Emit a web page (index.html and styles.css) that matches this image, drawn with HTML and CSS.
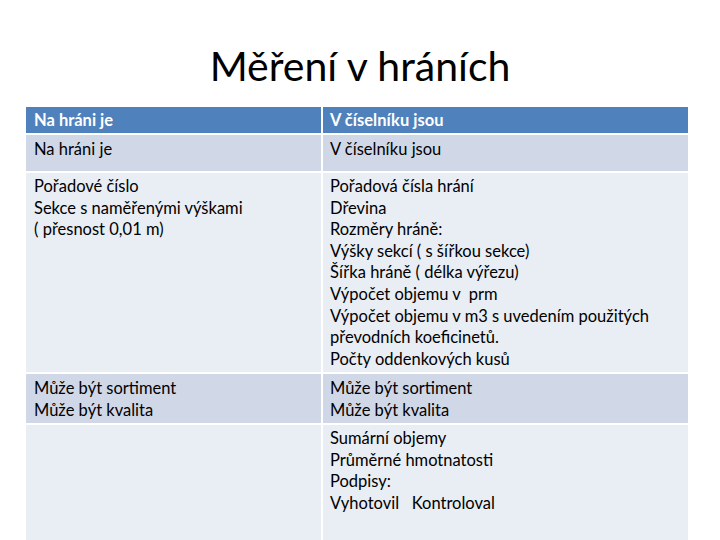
FILE: index.html
```html
<!DOCTYPE html>
<html lang="cs">
<head>
<meta charset="utf-8">
<link rel="stylesheet" href="styles.css">
</head>
<body>
<div class="slide">
  <h1 class="title">Měření v hráních</h1>
  <div class="table">
    <div class="cell head">Na hráni je</div>
    <div class="cell head">V číselníku jsou</div>
    <div class="cell dark">Na hráni je</div>
    <div class="cell dark">V číselníku jsou</div>
    <div class="cell light r2">Pořadové číslo<br>Sekce s naměřenými výškami<br>( přesnost 0,01 m)</div>
    <div class="cell light r2">Pořadová čísla hrání<br>Dřevina<br>Rozměry hráně:<br>Výšky sekcí ( s šířkou sekce)<br>Šířka hráně ( délka výřezu)<br>Výpočet objemu v&nbsp; prm<br>Výpočet objemu v m3 s uvedením použitých převodních koeficinetů.<br>Počty oddenkových kusů</div>
    <div class="cell dark r3">Může být sortiment<br>Může být kvalita</div>
    <div class="cell dark r3">Může být sortiment<br>Může být kvalita</div>
    <div class="cell light r4"></div>
    <div class="cell light r4">Sumární objemy<br>Průměrné hmotnatosti<br>Podpisy:<br>Vyhotovil&nbsp;&nbsp; Kontroloval</div>
  </div>
</div>
</body>
</html>
```
FILE: styles.css
```css
html, body {
  margin: 0;
  padding: 0;
  background: #ffffff;
}
.slide {
  width: 720px;
  height: 540px;
  overflow: hidden;
  font-family: Lato, "Open Sans", sans-serif;
}
.title {
  margin: 0;
  height: 107px;
  box-sizing: border-box;
  padding-top: 41px;
  text-align: center;
  font-weight: 400;
  font-size: 41px;
  line-height: 50px;
  color: #000000;
}
.table {
  display: grid;
  margin-left: 26px;
  width: 662px;
  grid-template-columns: 295px 365px;
  grid-template-rows: 26px 36px 199px 49px 140px;
  gap: 2px;
  background: #ffffff;
}
.cell {
  padding: 4px 6px 0 8px;
  font-size: 16.5px;
  line-height: 21.6px;
  color: #000000;
}
.cell:nth-child(even) {
  padding-left: 7px;
}
.head {
  background: #4f81bd;
  color: #ffffff;
  font-weight: 700;
  padding-top: 3px;
}
.dark {
  background: #d0d8e8;
}
.light {
  background: #e9edf4;
}
.r2 {
  padding-top: 3px;
}
.r4 {
  padding-top: 3px;
}
```
